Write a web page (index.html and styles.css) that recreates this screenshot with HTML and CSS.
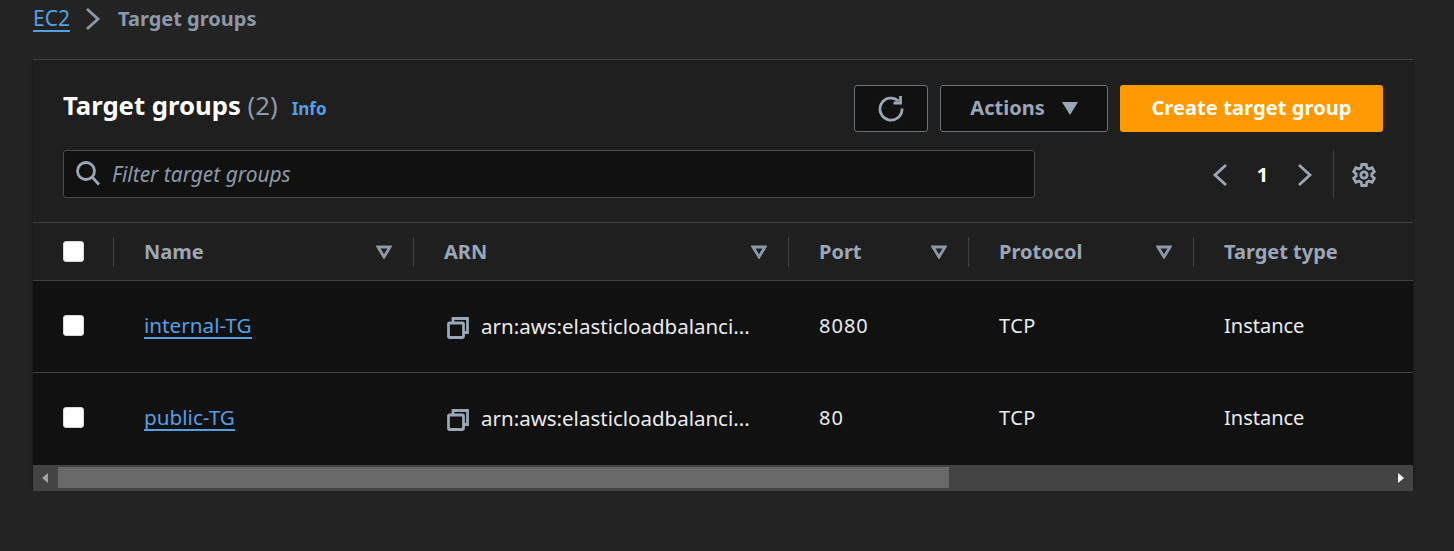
FILE: index.html
```html
<!DOCTYPE html>
<html lang="en">

<head>
    <meta charset="UTF-8">
    <title>Target groups</title>
    <link rel="stylesheet" href="styles.css">
</head>

<body>
    <nav class="breadcrumb">
        <a class="link" href="#">EC2</a>
        <svg class="crumb-arrow" width="16" height="24" viewBox="0 0 16 24"><path d="M2 2l11 10L2 22" /></svg>
        <span class="crumb-current">Target groups</span>
    </nav>

    <section class="card">
        <div class="card-top">
            <div class="title-row">
                <h1>Target groups <span class="count">(2)</span></h1>
                <a class="info" href="#">Info</a>
                <div class="actions">
                    <button class="btn btn-icon">
                        <svg width="28" height="28" viewBox="0 0 28 28"><path d="M21.500 7a11 11 0 1 0 3.500 7.500" /><path d="M23.500 2v7h-7" /></svg>
                    </button>
                    <button class="btn btn-actions">Actions <span class="caret"></span></button>
                    <button class="btn btn-primary">Create target group</button>
                </div>
            </div>
            <div class="filter-row">
                <div class="filter">
                    <svg width="26" height="26" viewBox="0 0 26 26"><circle cx="10" cy="10" r="8.500" /><path d="M16.500 16.500l6.500 7" /></svg>
                    <span>Filter target groups</span>
                </div>
                <div class="pager">
                    <svg width="18" height="26" viewBox="0 0 18 26"><path d="M14 3L3 13l11 10" /></svg>
                    <span class="page-num">1</span>
                    <svg width="18" height="26" viewBox="0 0 18 26"><path d="M4 3l11 10L4 23" /></svg>
                </div>
                <div class="settings">
                    <svg width="26" height="26" viewBox="0 0 26 26"><circle cx="13" cy="13" r="3.200" /><path d="M10.800 2.500h4.400l.7 3.300 2 1.100 3.200-1.100 2.200 3.900-2.500 2.200v2.200l2.500 2.200-2.200 3.900-3.200-1.100-2 1.100-.7 3.300h-4.400l-.7-3.300-2-1.100-3.200 1.100-2.200-3.900 2.500-2.200v-2.200L2.700 9.700l2.200-3.900 3.200 1.100 2-1.100z" /></svg>
                </div>
            </div>
        </div>

        <table>
            <colgroup>
                <col class="col-check">
                <col class="col-name">
                <col class="col-arn">
                <col class="col-port">
                <col class="col-proto">
                <col class="col-type">
            </colgroup>
            <thead>
                <tr>
                    <th><div class="th-in"><span class="box"></span></div></th>
                    <th><div class="th-in">Name <svg class="sort" width="16" height="14" viewBox="0 0 16 14"><path d="M2 2h12l-6 10z" /></svg></div></th>
                    <th><div class="th-in">ARN <svg class="sort" width="16" height="14" viewBox="0 0 16 14"><path d="M2 2h12l-6 10z" /></svg></div></th>
                    <th><div class="th-in">Port <svg class="sort" width="16" height="14" viewBox="0 0 16 14"><path d="M2 2h12l-6 10z" /></svg></div></th>
                    <th><div class="th-in">Protocol <svg class="sort" width="16" height="14" viewBox="0 0 16 14"><path d="M2 2h12l-6 10z" /></svg></div></th>
                    <th><div class="th-in">Target type</div></th>
                </tr>
            </thead>
            <tbody>
                <tr>
                    <td><span class="box"></span></td>
                    <td><a class="link" href="#">internal-TG</a></td>
                    <td>
                        <div class="arn">
                            <svg width="22" height="22" viewBox="0 0 22 22"><path d="M6 5.500v-4h14.500v14h-4" /><rect x="1.500" y="6" width="15" height="14.500" rx="1" /></svg>
                            <span>arn:aws:elasticloadbalanci...</span>
                        </div>
                    </td>
                    <td class="num">8080</td>
                    <td class="proto">TCP</td>
                    <td>Instance</td>
                </tr>
                <tr>
                    <td><span class="box"></span></td>
                    <td><a class="link" href="#">public-TG</a></td>
                    <td>
                        <div class="arn">
                            <svg width="22" height="22" viewBox="0 0 22 22"><path d="M6 5.500v-4h14.500v14h-4" /><rect x="1.500" y="6" width="15" height="14.500" rx="1" /></svg>
                            <span>arn:aws:elasticloadbalanci...</span>
                        </div>
                    </td>
                    <td class="num">80</td>
                    <td class="proto">TCP</td>
                    <td>Instance</td>
                </tr>
            </tbody>
        </table>

        <div class="scrollbar">
            <span class="arrow-left"></span>
            <div class="thumb"></div>
            <span class="arrow-right"></span>
        </div>
    </section>
</body>

</html>
```

FILE: styles.css
```css
/* CSS Reset */
* {
    margin: 0;
    padding: 0;
    box-sizing: border-box;
}

body {
    font-family: 'Noto Sans', sans-serif;
    font-size: 20px;
    background-color: #232323;
    color: #e9ebed;
    padding: 0 41px 0 33px;
    overflow: hidden;
}

svg {
    fill: none;
    stroke: #9ba7b6;
    stroke-width: 2.8;
    display: block;
    flex: none;
}

.link {
    color: #539fe5;
    text-decoration: none;
    border-bottom: 2px solid #539fe5;
    line-height: 24px;
    font-size: 20.7px;
    display: inline-block;
}

.breadcrumb {
    display: flex;
    align-items: center;
    height: 59px;
    padding-bottom: 22px;
}

.breadcrumb .link {
    font-size: 21px;
}

.breadcrumb svg {
    stroke: #8d99a8;
    margin: 0 17px 0 15px;
}

.crumb-current {
    color: #8d99a8;
    font-weight: 700;
}

.card {
    background-color: #1f1f1f;
    border-top: 1px solid #414141;
    box-shadow: 0 1px 2px #111;
}

.card-top {
    padding: 24px 30px 0 30px;
    height: 162px;
}

.title-row {
    display: flex;
    align-items: center;
    height: 48px;
}

h1 {
    font-size: 25.7px;
    font-weight: 700;
    color: #fff;
    margin-bottom: 6px;
}

.count {
    font-weight: 400;
    color: #8d99a8;
}

.info {
    color: #539fe5;
    font-size: 17px;
    font-weight: 700;
    text-decoration: none;
    margin-left: 14px;
}

.actions {
    display: flex;
    gap: 12px;
    margin-left: auto;
}

.btn {
    height: 47px;
    padding-bottom: 2px;
    font-family: inherit;
    font-size: 20px;
    font-weight: 700;
    border-radius: 3px;
    border: 1px solid #687078;
    background-color: #111;
    color: #9ba7b6;
    display: flex;
    align-items: center;
    justify-content: center;
}

.btn-icon {
    width: 74px;
    padding-bottom: 0;
}

.btn-actions {
    width: 168px;
    gap: 17px;
}

.caret {
    border-left: 8px solid transparent;
    border-right: 8px solid transparent;
    border-top: 13px solid #9ba7b6;
    margin-top: 2px;
}

.btn-primary {
    width: 263px;
    border: none;
    background-color: #ff9900;
    color: #fff;
    letter-spacing: .1px;
}

.filter-row {
    display: flex;
    align-items: center;
    margin-top: 18px;
}

.filter {
    width: 972px;
    height: 48px;
    display: flex;
    align-items: center;
    gap: 10px;
    padding-left: 12px;
    background-color: #111;
    border: 1px solid #4a4a4a;
    border-radius: 3px;
    color: #8d99a8;
    font-size: 20.9px;
    font-style: italic;
}

.pager {
    display: flex;
    align-items: center;
    margin-left: auto;
    margin-right: 20px;
    margin-top: 1px;
}

.page-num {
    color: #fff;
    font-weight: 700;
    width: 65px;
    text-align: center;
}

.settings {
    height: 48px;
    border-left: 1px solid #414141;
    padding: 12px 6px 0 17px;
}

table {
    width: 100%;
    table-layout: fixed;
    border-collapse: collapse;
}

.col-check { width: 80px; }
.col-name { width: 300px; }
.col-arn { width: 375px; }
.col-port { width: 180px; }
.col-proto { width: 225px; }

th {
    height: 58px;
    text-align: left;
    color: #9ba7b6;
    font-weight: 700;
    border-top: 1px solid #414141;
    border-bottom: 1px solid #414141;
    padding: 0;
}

.th-in {
    height: 30px;
    display: flex;
    align-items: center;
    justify-content: space-between;
    padding: 0 21px 0 30px;
    border-left: 1px solid #414141;
}

th:first-child .th-in {
    border-left: none;
}

.sort {
    stroke: #8d99a8;
}

td {
    height: 92px;
    background-color: #111;
    border-bottom: 1px solid #414141;
    padding: 0 31px 2px;
}

td:first-child {
    padding-left: 30px;
}

tbody tr:last-child td {
    border-bottom: none;
}

.num {
    letter-spacing: 1px;
}

.proto {
    letter-spacing: .5px;
}

.box {
    display: block;
    width: 21px;
    height: 21px;
    background-color: #fff;
    border: 1px solid #d5dbdb;
    border-radius: 3px;
}

.arn {
    display: flex;
    align-items: center;
    gap: 12px;
    margin-left: 3px;
    font-size: 20.5px;
    white-space: nowrap;
}

.arn svg {
    margin-top: 4px;
}

.scrollbar {
    height: 26px;
    background-color: #434343;
    display: flex;
    align-items: center;
    padding: 0 9px;
}

.thumb {
    width: 891px;
    height: 21px;
    margin-left: 10px;
    background-color: #686868;
}

.arrow-left {
    border-top: 5px solid transparent;
    border-bottom: 5px solid transparent;
    border-right: 6px solid #a3a3a3;
}

.arrow-right {
    margin-left: auto;
    border-top: 5px solid transparent;
    border-bottom: 5px solid transparent;
    border-left: 6px solid #fff;
}
```
